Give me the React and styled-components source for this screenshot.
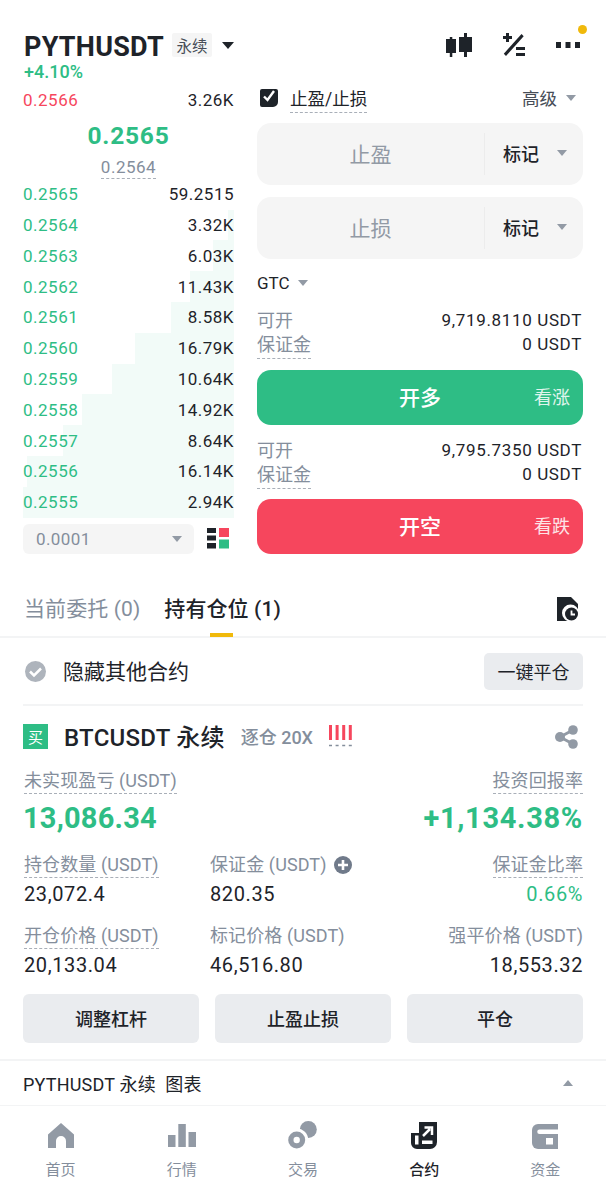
import React from "react";
import styled, { createGlobalStyle } from "styled-components";

const Global = createGlobalStyle`
  html, body { margin: 0; padding: 0; background: #fff; }
  * { box-sizing: border-box; }
  body { font-family: Roboto, "Noto Sans CJK SC", sans-serif; color: #1e2329; }
`;
const Page = styled.div`width: 606px; height: 1200px; overflow: hidden; display: flex; flex-direction: column; background: #fff;`;
const Header = styled.header`height: 62px; padding: 32px 26px 0 24px; display: flex; align-items: center;`;
const Symbol = styled.div`font-size: 27px; font-weight: 700; line-height: 30px; letter-spacing: .25px;`;
const Tag = styled.span`margin: -4px 0 0 8px; width: 40px; height: 24px; background: #f5f5f5; border-radius: 2px; font-size: 15.5px; display: flex; align-items: center; justify-content: center; color: #474d57;`;
const Tri = styled.i`display: block; width: 0; height: 0; border-left: ${p => p.$s || 6}px solid transparent; border-right: ${p => p.$s || 6}px solid transparent; border-top: ${p => (p.$s || 6) * 1.25}px solid ${p => p.$c || "#929aa5"}; margin-left: ${p => p.$ml || 0}px; margin-top: ${p => p.$mt || 0}px;`;
const TriUp = styled(Tri)`border-top: 0; border-bottom: ${p => (p.$s || 6) * 1.25}px solid #929aa5;`;
const HeadIcons = styled.div`margin: -4px 0 0 auto; display: flex; align-items: center; gap: 30px; position: relative;`;
const Dot = styled.span`position: absolute; right: -7px; top: -8px; width: 9px; height: 9px; border-radius: 50%; background: #f0b90b;`;
const Change = styled.div`padding-left: 24px; font-size: 18px; font-weight: 500; color: #2ebd85; line-height: 20px;`;
const Main = styled.section`display: flex; padding: 3px 23px 0 23px; gap: 23px;`;
const Left = styled.div`width: 211px; display: flex; flex-direction: column;`;
const Right = styled.div`width: 326px; display: flex; flex-direction: column;`;
const Row = styled.div`height: 30.8px; flex: none; display: flex; justify-content: space-between; align-items: center; font-size: 17px; letter-spacing: .5px;
  background: linear-gradient(to left, #f2fbf8 ${p => p.$d}%, transparent ${p => p.$d}%);`;
const Price = styled.span`color: ${p => p.$c};`;
const Qty = styled.span`color: #1e2329;`;
const Mid = styled.div`display: flex; flex-direction: column; align-items: center; padding-top: 5px; height: 63px;`;
const Last = styled.div`font-size: 24.5px; font-weight: 700; color: #2ebd85; line-height: 30px; letter-spacing: .8px;`;
const Mark = styled.div`font-size: 17px; color: #848e9c; line-height: 22px; margin-top: 5px; letter-spacing: .5px; border-bottom: 1px dashed #a9afb8;`;
const Depth = styled.div`display: flex; align-items: center; justify-content: space-between; margin-top: 6px; padding-right: 5px;`;
const DepthSelect = styled.div`width: 171px; height: 30px; border-radius: 6px; background: #f5f5f5; color: #848e9c; display: flex; align-items: center; justify-content: space-between; font-size: 17px; letter-spacing: .4px; padding: 0 12px 0 13px;`;
const CheckRow = styled.div`display: flex; align-items: center; height: 25px; font-size: 17.5px; padding-left: 3px;`;
const Dashed = styled.span`border-bottom: 1px dashed #a9afb8;`;
const CheckLabel = styled(Dashed)`margin-left: 12px; color: #1e2329; line-height: 26px; margin-top: 3px;`;
const Adv = styled.div`margin-left: auto; display: flex; align-items: center; font-size: 17.5px; color: #474d57; padding-right: 7px;`;
const Field = styled.div`height: 62px; background: #f5f5f5; border-radius: 14px; display: flex; align-items: center; margin-top: ${p => p.$mt}px;`;
const FieldName = styled.div`flex: 1; text-align: center; color: #929aa5; font-size: 21px; border-right: 1px solid #ececec; height: 42px; line-height: 44px;`;
const FieldType = styled.div`width: 98px; padding: 0 16px 0 18px; margin-top: -2px; display: flex; justify-content: space-between; align-items: center; font-size: 18px; font-weight: 500; color: #1e2329;`;
const Gtc = styled.div`display: flex; align-items: center; height: 22px; margin-top: 13px; font-size: 17px; color: #1e2329;`;
const Info = styled.div`display: flex; justify-content: space-between; font-size: 17px; line-height: 24px; color: #1e2329; letter-spacing: .65px; padding-right: 1px; height: ${p => p.$h || 24}px; margin-top: ${p => p.$mt || 0}px;`;
const InfoLabel = styled.span`color: #848e9c; letter-spacing: 0; font-size: 18px; line-height: 26px;`;
const InfoLabelDashed = styled(InfoLabel)`border-bottom: 1px dashed #a9afb8; height: 27px;`;
const Action = styled.div`height: 55px; flex: none; border-radius: 14px; background: ${p => p.$bg}; color: #fff; margin-top: ${p => p.$mt}px; padding-bottom: 3px; display: flex; align-items: center; position: relative; justify-content: center; font-size: 21px; font-weight: 500;`;
const ActionHint = styled.span`position: absolute; right: 13px; font-size: 18px; font-weight: 400; opacity: .85;`;
const Tabs = styled.nav`margin-top: 30px; height: 54px; flex: none; border-bottom: 2px solid #f3f4f5; display: flex; align-items: flex-start; padding: 11px 27px 0 24px;`;
const Tab = styled.div`font-size: 21px; line-height: 28px; color: ${p => p.$on ? "#1e2329" : "#848e9c"}; font-weight: ${p => p.$on ? 500 : 400}; margin-right: 24px; position: relative; letter-spacing: .1px;`;
const TabBar = styled.span`position: absolute; left: 46px; top: 38px; width: 23px; height: 4px; background: #f0b90b;`;
const TabIcon = styled.span`margin-left: auto; margin-top: 2px; display: flex;`;
const Body = styled.section`padding: 0 23px;`;
const Filter = styled.div`height: 68px; padding-left: 2px; display: flex; align-items: center; border-bottom: 2px solid #f3f4f5; font-size: 21px;`;
const FilterText = styled.span`margin: -2px 0 0 17px; color: #1e2329;`;
const CloseAll = styled.div`margin-left: auto; width: 99px; height: 37px; border-radius: 5px; background: #eaecef; display: flex; align-items: center; justify-content: center; font-size: 18px; color: #1e2329;`;
const Pos = styled.div`height: 62px; display: flex; align-items: center;`;
const Buy = styled.span`width: 25px; height: 25px; background: #2ebd85; color: #fff; font-size: 15px; display: flex; align-items: center; justify-content: center; margin-top: -1px;`;
const PosName = styled.span`margin: -3px 0 0 16px; font-size: 24px; font-weight: 500; color: #1e2329; letter-spacing: .25px;`;
const PosMode = styled.span`margin: -2px 0 0 16px; font-size: 18px; color: #848e9c; font-weight: 500;`;
const Adl = styled.span`margin-left: 16px; margin-top: -2px; display: flex;`;
const PosShare = styled.span`margin-left: auto; margin-right: 5px; display: flex;`;
const Line2 = styled.div`display: flex; justify-content: space-between;`;
const Lab = styled.span`font-size: 18px; line-height: 25px; height: 26px; color: #848e9c; border-bottom: 1px ${p => p.$d ? "dashed #a9afb8" : "solid transparent"}; display: inline-flex; align-items: center; gap: 7px; letter-spacing: .1px; margin-left: ${p => p.$r ? 0 : 1}px;`;
const Big = styled.div`font-size: 29px; line-height: 37px; font-weight: 700; color: #2ebd85; letter-spacing: ${p => p.$r ? ".7px" : ".2px"}; margin-top: 6px;`;
const Grid = styled.div`display: grid; grid-template-columns: 186px 1fr auto; margin-top: ${p => p.$mt}px;`;
const Cell = styled.div`display: flex; flex-direction: column; align-items: ${p => p.$r ? "flex-end" : "flex-start"};`;
const Val = styled.div`font-size: 20px; line-height: 27px; color: ${p => p.$c || "#1e2329"}; letter-spacing: .6px; margin: 3px 0 0 1px;`;
const Col = styled.div`display: flex; flex-direction: column; align-items: ${p => p.$r ? "flex-end" : "flex-start"};`;
const Buttons = styled.div`display: grid; grid-template-columns: repeat(3, 176px); gap: 16px; margin-top: 15px;`;
const Btn = styled.div`height: 49px; padding-bottom: 2px; border-radius: 6px; background: #eaecef; display: flex; align-items: center; justify-content: center; font-size: 18px; font-weight: 500; color: #1e2329;`;
const Chart = styled.div`margin-top: 16px; height: 47px; flex: none; border-top: 2px solid #f3f4f5; border-bottom: 1px solid #f3f4f5; display: flex; align-items: center; justify-content: space-between; padding: 0 33px 1px 23px; font-size: 18px; letter-spacing: .2px; color: #1e2329;`;
const Nav = styled.nav`display: grid; grid-template-columns: repeat(5, 121.2px); padding-top: 15px;`;
const NavItem = styled.div`display: flex; flex-direction: column; align-items: center; color: ${p => p.$on ? "#1e2329" : "#848e9c"}; font-size: 15px; font-weight: ${p => p.$on ? 500 : 400};`;
const NavIcon = styled.div`height: 28px; display: flex; align-items: flex-end;`;
const NavLabel = styled.span`margin-top: 11px; line-height: 20px;`;

const K = "#1e2329", G = "#929aa5";
const Candle = () => <svg width="26" height="24" viewBox="0 0 26 24"><g fill={K}><rect x="0" y="6" width="10" height="14"/><rect x="3.800" y="4" width="2.500" height="20"/><rect x="13" y="4" width="13" height="15"/><rect x="18" y="0" width="3" height="24"/></g></svg>;
const Calc = () => <svg width="24" height="24" viewBox="0 0 24 24" fill={K}><path d="M4 0h3v3h3v3H7v3H4V6H1V3h3z"/><path d="M19.500 1l2.200 2.200L4 23 1.800 20.800z"/><rect x="14" y="14" width="9" height="3"/><rect x="14" y="20" width="9" height="3"/></svg>;
const More = () => <svg width="24" height="6" viewBox="0 0 24 6" fill={K}><rect width="5" height="6"/><rect x="9.500" width="5" height="6"/><rect x="19" width="5" height="6"/></svg>;
const Check = () => <svg width="18" height="18" viewBox="0 0 18 18"><path d="M0 2a2 2 0 0 1 2-2h14a2 2 0 0 1 2 2v11a5 5 0 0 1-5 5H2a2 2 0 0 1-2-2z" fill={K}/><path d="M4 7.500l3.500 3.500L14 2" stroke="#fff" strokeWidth="2.400" fill="none"/></svg>;
const Layout = () => <svg width="22" height="21" viewBox="0 0 22 21"><g fill={K}><rect y="0" width="9" height="5"/><rect y="7.500" width="9" height="5"/><rect y="15" width="9" height="5.500"/></g><rect x="12" width="10" height="9" fill="#f6465d"/><rect x="12" y="11.500" width="10" height="9" fill="#2ebd85"/></svg>;
const History = () => <svg width="22" height="24" viewBox="0 0 22 24"><path d="M0 0h14l7 7v17H0z" fill={K}/><circle cx="13.500" cy="16" r="8.500" fill="#fff"/><rect x="13" y="20" width="9" height="4" fill="#fff"/><circle cx="14.500" cy="17" r="6.500" fill={K}/><path d="M14.500 13.500v4h3.500" stroke="#fff" strokeWidth="1.800" fill="none"/></svg>;
const Tick = () => <svg width="21" height="21" viewBox="0 0 21 21"><circle cx="10.500" cy="10.500" r="10.500" fill="#aeb4bc"/><path d="M5 10.500l4 4 7-7" stroke="#fff" strokeWidth="2.500" fill="none"/></svg>;
const Bars = () => <svg width="23" height="23" viewBox="0 0 23 23"><g fill="#f6465d"><rect width="3" height="15"/><rect x="6.600" width="3" height="15"/><rect x="13.200" width="3" height="15"/><rect x="19.800" width="3" height="15"/></g><path d="M0 20.500h23" stroke="#848e9c" strokeWidth="1.300" strokeDasharray="3 3.600"/></svg>;
const Share = () => <svg width="23" height="24" viewBox="0 0 23 24" fill={G}><circle cx="18" cy="5" r="4.800"/><circle cx="5" cy="12" r="5"/><circle cx="18" cy="19" r="4.800"/><path d="M5 12L18 5M5 12l13 7" stroke={G} strokeWidth="3"/></svg>;
const Plus = () => <svg width="18" height="18" viewBox="0 0 18 18"><circle cx="9" cy="9" r="9" fill="#707a8a"/><path d="M9 4v10M4 9h10" stroke="#fff" strokeWidth="2.600"/></svg>;
const Home = () => <svg width="26" height="26" viewBox="0 0 26 26"><path d="M13 0L26 11.500V25H18V18a5 5 0 0 0-10 0v7H0V11.500z" fill={G}/></svg>;
const Market = () => <svg width="28" height="25" viewBox="0 0 28 25" fill={G}><rect y="11" width="7.500" height="12"/><rect x="10.300" width="7.500" height="23"/><rect x="20.500" y="8" width="7.500" height="15"/></svg>;
const Trade = () => <svg width="29" height="28" viewBox="0 0 29 28"><circle cx="20.300" cy="8.500" r="8.500" fill={G}/><circle cx="8.700" cy="19" r="11.500" fill="#fff"/><circle cx="8.700" cy="19" r="8.500" fill={G}/><circle cx="8.700" cy="19" r="3.200" fill="#fff"/></svg>;
const Futures = () => <svg width="26" height="27" viewBox="0 0 26 27"><path d="M8 0h18v20a7 7 0 0 1-7 7H6a6 6 0 0 1-6-6V11h8z" fill={K}/><rect x="4" y="13.500" width="3.500" height="9" fill="#fff"/><rect x="11" y="18.500" width="10.500" height="3.500" fill="#fff"/><path d="M12 14l7-7M13.500 5.500H21V13" stroke="#fff" strokeWidth="2.500" fill="none"/></svg>;
const Funds = () => <svg width="26" height="26" viewBox="0 0 26 26"><path d="M6 1h20v25H6a6 6 0 0 1-6-6V7a6 6 0 0 1 6-6z" fill={G}/><path d="M7.500 6.500H26V11H7.500a2.250 2.250 0 0 1 0-4.500z" fill="#fff"/><rect x="14" y="15" width="7" height="6.500" fill="#fff"/></svg>;

const bids = [["0.2565","59.2515",0],["0.2564","3.32K",3],["0.2563","6.03K",10],["0.2562","11.43K",21],["0.2561","8.58K",30],["0.2560","16.79K",47],["0.2559","10.64K",58],["0.2558","14.92K",72],["0.2557","8.64K",81],["0.2556","16.14K",98],["0.2555","2.94K",100]];
const nav = [["首页",<Home/>],["行情",<Market/>],["交易",<Trade/>],["合约",<Futures/>,true],["资金",<Funds/>]];

export default function App() {
  return (
    <Page>
      <Global />
      <Header>
        <Symbol>PYTHUSDT</Symbol>
        <Tag>永续</Tag>
        <Tri $s={6} $c={K} $ml={10} $mt={-4} />
        <HeadIcons><Candle /><Calc /><More /><Dot /></HeadIcons>
      </Header>
      <Change>+4.10%</Change>
      <Main>
        <Left>
          <Row $d={0}><Price $c="#f6465d">0.2566</Price><Qty>3.26K</Qty></Row>
          <Mid><Last>0.2565</Last><Mark>0.2564</Mark></Mid>
          {bids.map(([p, q, d]) => <Row key={p} $d={d}><Price $c="#2ebd85">{p}</Price><Qty>{q}</Qty></Row>)}
          <Depth><DepthSelect>0.0001<Tri $s={5.500} /></DepthSelect><Layout /></Depth>
        </Left>
        <Right>
          <CheckRow><Check /><CheckLabel>止盈/止损</CheckLabel><Adv>高级<Tri $s={5} $ml={9} /></Adv></CheckRow>
          <Field $mt={13}><FieldName>止盈</FieldName><FieldType>标记<Tri $s={5} /></FieldType></Field>
          <Field $mt={12}><FieldName>止损</FieldName><FieldType>标记<Tri $s={5} /></FieldType></Field>
          <Gtc>GTC<Tri $s={5} $ml={8} /></Gtc>
          <Info $mt={14}><InfoLabel>可开</InfoLabel><span>9,719.8110 USDT</span></Info>
          <Info $h={27}><InfoLabelDashed>保证金</InfoLabelDashed><span>0 USDT</span></Info>
          <Action $bg="#2ebd85" $mt={11}>开多<ActionHint>看涨</ActionHint></Action>
          <Info $mt={13}><InfoLabel>可开</InfoLabel><span>9,795.7350 USDT</span></Info>
          <Info $h={27}><InfoLabelDashed>保证金</InfoLabelDashed><span>0 USDT</span></Info>
          <Action $bg="#f6465d" $mt={10}>开空<ActionHint>看跌</ActionHint></Action>
        </Right>
      </Main>
      <Tabs>
        <Tab>当前委托 (0)</Tab>
        <Tab $on>持有仓位 (1)<TabBar /></Tab>
        <TabIcon><History /></TabIcon>
      </Tabs>
      <Body>
        <Filter><Tick /><FilterText>隐藏其他合约</FilterText><CloseAll>一键平仓</CloseAll></Filter>
        <Pos><Buy>买</Buy><PosName>BTCUSDT 永续</PosName><PosMode>逐仓 20X</PosMode><Adl><Bars /></Adl><PosShare><Share /></PosShare></Pos>
        <Line2>
          <Col><Lab $d>未实现盈亏 (USDT)</Lab><Big>13,086.34</Big></Col>
          <Col $r><Lab $d $r>投资回报率</Lab><Big $r>+1,134.38%</Big></Col>
        </Line2>
        <Grid $mt={15}>
          <Cell><Lab $d>持仓数量 (USDT)</Lab><Val>23,072.4</Val></Cell>
          <Cell><Lab>保证金 (USDT)<Plus /></Lab><Val>820.35</Val></Cell>
          <Cell $r><Lab $d $r>保证金比率</Lab><Val $c="#2ebd85">0.66%</Val></Cell>
        </Grid>
        <Grid $mt={15}>
          <Cell><Lab $d>开仓价格 (USDT)</Lab><Val>20,133.04</Val></Cell>
          <Cell><Lab>标记价格 (USDT)</Lab><Val>46,516.80</Val></Cell>
          <Cell $r><Lab $r>强平价格 (USDT)</Lab><Val>18,553.32</Val></Cell>
        </Grid>
        <Buttons><Btn>调整杠杆</Btn><Btn>止盈止损</Btn><Btn>平仓</Btn></Buttons>
      </Body>
      <Chart><span>PYTHUSDT 永续&nbsp;&nbsp;图表</span><TriUp $s={5} /></Chart>
      <Nav>{nav.map(([t, icon, on]) => <NavItem key={t} $on={on}><NavIcon>{icon}</NavIcon><NavLabel>{t}</NavLabel></NavItem>)}</Nav>
    </Page>
  );
}
